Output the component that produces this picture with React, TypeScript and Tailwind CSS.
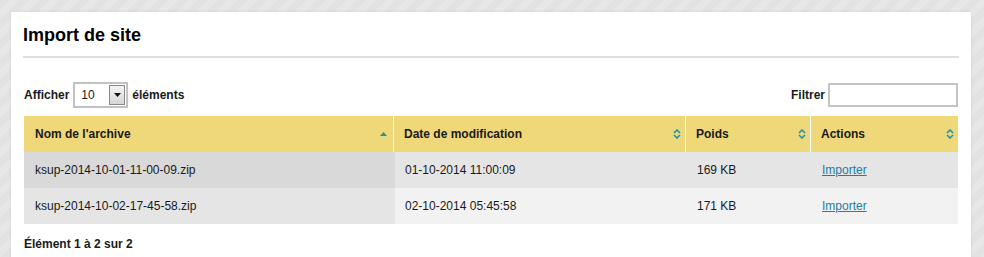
import React from "react";

function SortAsc() {
  return (
    <svg width="9" height="6" viewBox="0 0 9 6" className="block">
      <path d="M4.5 1 L8 5 L1 5 Z" fill="#1a93b6" />
    </svg>
  );
}

function SortBoth() {
  return (
    <svg width="8" height="10" viewBox="0 0 8 10" className="block">
      <path d="M1 4 L4 1 L7 4" stroke="#1a93b6" strokeWidth="1.6" fill="none" />
      <path d="M1 6 L4 9 L7 6" stroke="#1a93b6" strokeWidth="1.6" fill="none" />
    </svg>
  );
}

const rows = [
  { name: "ksup-2014-10-01-11-00-09.zip", date: "01-10-2014 11:00:09", size: "169 KB" },
  { name: "ksup-2014-10-02-17-45-58.zip", date: "02-10-2014 05:45:58", size: "171 KB" },
];

export default function App() {
  return (
    <div
      className="h-[257px] overflow-hidden bg-[#e4e4e4] bg-[repeating-linear-gradient(135deg,#e2e2e2_0px,#e2e2e2_7px,#e7e7e7_7px,#e7e7e7_14px)] pt-[12px] pl-[11px] text-[12px] text-[#1a1a1a]"
      style={{ fontFamily: '"Liberation Sans", Arial, sans-serif' }}
    >
      <div className="w-[960px] h-[260px] bg-white px-[12px] shadow-[0_0_3px_rgba(0,0,0,0.08)]">
        <div className="h-[46px] border-b-2 border-[#dedede] pt-[13px]">
          <h1 className="text-[18px] leading-[21px] font-bold text-black">Import de site</h1>
        </div>

        <div className="mt-[24px] flex items-center justify-between pl-px pr-px h-[26px]">
          <div className="flex items-center font-bold">
            <span>Afficher</span>
            <div className="ml-[4px] mr-[4px] flex h-[26px] w-[55px] items-center border-2 border-[#c2c2c2] bg-white">
              <span className="pl-[6px] font-normal flex-1">10</span>
              <div className="mr-[1px] flex h-[20px] w-[16px] items-center justify-center border border-[#8a8a8a] bg-[linear-gradient(#f4f4f4,#d6d6d6)]">
                <svg width="7" height="4" viewBox="0 0 7 4">
                  <path d="M0 0 L7 0 L3.5 4 Z" fill="#111" />
                </svg>
              </div>
            </div>
            <span>éléments</span>
          </div>
          <div className="flex items-center font-bold">
            <span className="mr-[3px]">Filtrer</span>
            <div className="h-[24px] w-[130px] border-2 border-[#c4c4c4] bg-white" />
          </div>
        </div>

        <div className="mt-[8px] mx-px">
          <div className="flex h-[36px] bg-[#efd87a] font-bold">
            <div className="flex w-[370px] items-center justify-between pl-[11px] pr-[5px] border-r border-white">
              <span>Nom de l'archive</span>
              <SortAsc />
            </div>
            <div className="flex w-[292px] items-center justify-between pl-[10px] pr-[4px] border-r border-white">
              <span>Date de modification</span>
              <SortBoth />
            </div>
            <div className="flex w-[125px] items-center justify-between pl-[10px] pr-[4px] border-r border-white">
              <span>Poids</span>
              <SortBoth />
            </div>
            <div className="flex flex-1 items-center justify-between pl-[10px] pr-[4px]">
              <span>Actions</span>
              <SortBoth />
            </div>
          </div>
          {rows.map((r, i) => (
            <div key={r.name} className={`flex h-[36px] items-center ${i === 0 ? "bg-[#e5e5e5]" : "bg-[#f2f2f2]"}`}>
              <div className={`flex h-full w-[371px] items-center pl-[11px] ${i === 0 ? "bg-[#d9d9d9]" : "bg-[#e5e5e5]"}`}>
                {r.name}
              </div>
              <div className="w-[292px] pl-[10px]">{r.date}</div>
              <div className="w-[125px] pl-[10px]">{r.size}</div>
              <div className="flex-1 pl-[10px]">
                <a href="#" className="text-[#1b7fa6] underline">Importer</a>
              </div>
            </div>
          ))}
        </div>

        <div className="mt-[11px] pl-px font-bold">Élément 1 à 2 sur 2</div>
      </div>
    </div>
  );
}
